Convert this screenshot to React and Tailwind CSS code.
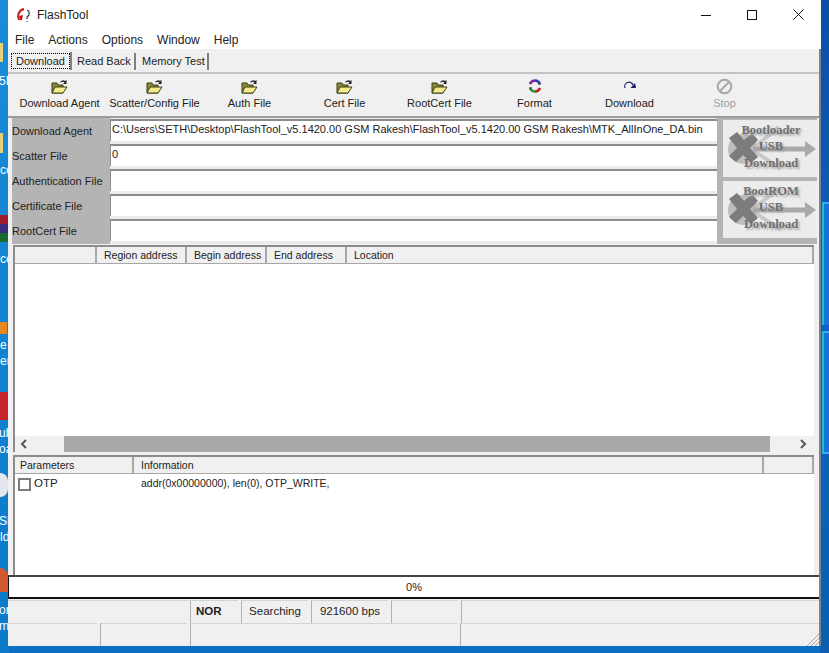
import React from "react";

const Folder = () => (
  <svg width="18" height="15" viewBox="0 0 18 15" className="-ml-[2px]">
    <path d="M2 4 L2 14 L13 14 L13 6 L8 6 L7 4 Z" fill="#8a8a3a" stroke="#3c3c14" strokeWidth="1" />
    <path d="M2 14 L5 8 L17 8 L13 14 Z" fill="#f4ec8c" stroke="#3c3c14" strokeWidth="1" />
    <path d="M10 3 Q13 0 15 2 L16.5 1 L16.5 5 L13 5 L14.5 3.5 Q13 2 11 3.5" fill="#222" />
  </svg>
);

const FormatIcon = () => (
  <svg width="14" height="14" viewBox="0 0 14 14" fill="none" strokeWidth="2.6">
    <path d="M2 5 A5.5 5.5 0 0 1 7 1.5" stroke="#7a2a9a" />
    <path d="M7 1.5 A5.5 5.5 0 0 1 12 5" stroke="#3a3ab0" />
    <path d="M12 9 A5.5 5.5 0 0 1 7 12.5" stroke="#d02020" />
    <path d="M7 12.5 A5.5 5.5 0 0 1 2 9" stroke="#2a9a3a" />
    <path d="M11 3 L13 5.5 L10 6 Z M3 11 L1 8.5 L4 8 Z" fill="#444" />
  </svg>
);

const RedoIcon = () => (
  <svg width="14" height="12" viewBox="0 0 14 12" fill="none">
    <path d="M2 8 A4 4 0 0 1 10 5" stroke="#1a1a70" strokeWidth="1.2" />
    <path d="M7.5 8 L13 8 L12 3 Z" fill="#1a1a70" />
  </svg>
);

const StopIcon = () => (
  <svg width="17" height="17" viewBox="0 0 17 17" fill="none" stroke="#a8a8a8" strokeWidth="2">
    <circle cx="8.5" cy="8.5" r="6.8" />
    <path d="M4 13 L13 4" />
  </svg>
);

const Chevron = ({ flip }) => (
  <svg width="8" height="10" viewBox="0 0 8 10" fill="none" stroke="#555" strokeWidth="2" className={flip ? "rotate-180" : ""}>
    <path d="M6 1 L2 5 L6 9" />
  </svg>
);

const tools = [
  { label: "Download Agent", icon: <Folder /> },
  { label: "Scatter/Config File", icon: <Folder /> },
  { label: "Auth File", icon: <Folder /> },
  { label: "Cert File", icon: <Folder /> },
  { label: "RootCert File", icon: <Folder /> },
  { label: "Format", icon: <FormatIcon /> },
  { label: "Download", icon: <RedoIcon /> },
  { label: "Stop", icon: <StopIcon />, off: true },
];

const fileRows = [
  { label: "Download Agent", value: "C:\\Users\\SETH\\Desktop\\FlashTool_v5.1420.00 GSM Rakesh\\FlashTool_v5.1420.00 GSM Rakesh\\MTK_AllInOne_DA.bin" },
  { label: "Scatter File", value: "0" },
  { label: "Authentication File", value: "" },
  { label: "Certificate File", value: "" },
  { label: "RootCert File", value: "" },
];

const regionCols = [
  { label: "", w: "w-[82px]" },
  { label: "Region address", w: "w-[90px]" },
  { label: "Begin address", w: "w-[80px]" },
  { label: "End address", w: "w-[80px]" },
  { label: "Location", w: "flex-1 border-r-0" },
];

const BootButton = ({ lines }) => (
  <div className="relative h-[57px] w-[94px] overflow-hidden bg-[#ececec]">
    <svg className="absolute left-0 top-0" width="94" height="57" viewBox="0 0 94 57">
      <circle cx="20" cy="29" r="15" fill="#bdbdbd" />
      <path d="M30 29 L84 29" stroke="#a9a9a9" strokeWidth="5" />
      <path d="M82 21 L93 29 L82 37 Z" fill="#a9a9a9" />
      <path d="M34 25 L56 7 M34 33 L58 49" stroke="#c8c8c8" strokeWidth="4" />
      <path d="M6 18 L14 12 L21 20 L29 13 L35 20 L27 28 L35 37 L28 43 L20 35 L13 42 L6 36 L14 28 Z" fill="#7c7c7c" />
    </svg>
    <div className="absolute inset-0 flex flex-col items-center justify-between pt-[3px] pb-[6px] pl-[2px] font-['Liberation_Serif',serif] text-[12.5px] leading-[15px] font-bold text-[#707070] [text-shadow:2px_2px_2px_#aaa]">
      {lines.map((t) => (
        <span key={t}>{t}</span>
      ))}
    </div>
  </div>
);

const HeaderCell = ({ label, className }) => (
  <div className={`flex h-full items-center whitespace-nowrap border-r-2 border-b border-[#a8a8a8] bg-[#f0f0f0] text-[10.5px] ${className}`}>{label}</div>
);

const StatusCell = ({ children, className }) => (
  <div className={`flex h-full items-center border-t border-l border-t-[#d4d4d4] border-l-[#b0b0b0] ${className}`}>{children}</div>
);

export default function App() {
  return (
    <div className="relative flex h-[653px] w-[829px] overflow-hidden bg-[#0a6fc2] font-['Liberation_Sans',sans-serif] text-[11px] text-[#222]">
      {/* bits of the desktop showing around the window */}
      <div className="absolute top-0 left-0 h-[653px] w-[9px] bg-gradient-to-b from-[#1a8cd8] to-[#0c79c9] text-[12px] leading-[14px] text-white">
        <div className="absolute top-[43px] left-0 h-[19px] w-[3px] bg-[#e8cf78]" />
        <span className="absolute top-[74px] -left-[1px]">5E</span>
        <div className="absolute top-[133px] left-0 h-[20px] w-[3px] bg-[#e8cf78]" />
        <span className="absolute top-[163px] left-0">ce</span>
        <div className="absolute top-[215px] left-0 h-[9px] w-[8px] bg-[#a01c2c]" />
        <div className="absolute top-[224px] left-0 h-[9px] w-[8px] bg-[#3a2a80]" />
        <div className="absolute top-[233px] left-0 h-[9px] w-[8px] bg-[#1c6a30]" />
        <span className="absolute top-[252px] left-0">ce</span>
        <div className="absolute top-[322px] left-0 h-[12px] w-[7px] bg-[#e8861c]" />
        <span className="absolute top-[338px] left-0">e</span>
        <span className="absolute top-[354px] left-0">er</span>
        <div className="absolute top-[392px] left-0 h-[28px] w-[8px] bg-[#c8242c]" />
        <span className="absolute top-[426px] -left-[1px]">ub</span>
        <span className="absolute top-[442px] -left-[1px]">oa</span>
        <div className="absolute top-[473px] left-0 h-[24px] w-[8px] rounded-r-full bg-[#e4e8ec]" />
        <span className="absolute top-[514px] -left-[1px]">Sh</span>
        <span className="absolute top-[530px] left-0">ld</span>
        <div className="absolute top-[568px] left-0 h-[24px] w-[8px] rounded-tr-full bg-[#d0582c]" />
        <span className="absolute top-[603px] -left-[1px]">or</span>
        <span className="absolute top-[619px] -left-[1px]">m</span>
      </div>
      <div className="absolute top-0 right-0 h-[653px] w-[9px] bg-gradient-to-b from-[#0b4fa6] via-[#0b62c4] to-[#0b5fae]">
        <div className="absolute top-[202px] left-[2px] h-[123px] w-[7px] border-t-2 border-l-2 border-[#2cb4e0] bg-[#0f78d0]" />
        <div className="absolute top-[331px] left-[2px] h-[123px] w-[7px] border-t-2 border-l-2 border-b-2 border-[#2cb4e0] bg-[#0f78d0]" />
      </div>

      <div className="relative ml-[8px] flex h-[646px] w-[813px] flex-col border-r-2 border-[#7c8288] bg-[#f0f0f0]">
        {/* title bar */}
        <div className="-mr-[2px] flex h-[30px] items-center bg-white">
          <svg className="ml-[9px]" width="14" height="16" viewBox="0 0 14 16" fill="none">
            <path d="M2 13 C0 8 2 3 7 2" stroke="#c01818" strokeWidth="2" />
            <path d="M2 9 L6 8 L5 13 L3 13 Z" fill="#c01818" />
            <path d="M10 3 C13 4 13 8 10 10 L10 12" stroke="#333" strokeWidth="1.2" />
            <path d="M10 14 L10 15" stroke="#333" strokeWidth="1.2" />
          </svg>
          <span className="ml-[6px] text-[12px]">FlashTool</span>
          <div className="ml-auto flex items-center">
            <svg className="mr-[36px]" width="10" height="10" viewBox="0 0 10 10" stroke="#111">
              <path d="M0 5.5 L10 5.5" />
            </svg>
            <svg className="mr-[36px]" width="10" height="10" viewBox="0 0 10 10" fill="none" stroke="#111">
              <rect x="0.5" y="0.5" width="9" height="9" />
            </svg>
            <svg className="mr-[17px]" width="11" height="11" viewBox="0 0 11 11" stroke="#111">
              <path d="M0.5 0.5 L10.5 10.5 M10.5 0.5 L0.5 10.5" />
            </svg>
          </div>
        </div>

        {/* menu */}
        <div className="-mr-[2px] flex h-[19px] items-center gap-[14px] bg-white pt-[2px] pl-[7px] text-[12px]">
          {["File", "Actions", "Options", "Window", "Help"].map((m) => (
            <span key={m}>{m}</span>
          ))}
        </div>

        {/* tabs */}
        <div className="flex h-[25px] items-start border-b-2 border-[#c4c4c4] pt-[3px] pl-[3px]">
          <div className="flex h-[18px] w-[61px] items-center border-r-2 border-[#808080]">
            <span className="flex h-[16px] w-[59px] items-center justify-center border border-dotted border-black">Download</span>
          </div>
          <div className="mt-[1px] flex h-[17px] w-[64px] items-center border-r-2 border-[#808080] pl-[5px]">Read Back</div>
          <div className="mt-[1px] flex h-[17px] w-[73px] items-center border-r-2 border-[#808080] pl-[6px]">Memory Test</div>
        </div>

        {/* toolbar */}
        <div className="flex h-[44px] border-b-2 border-[#9c9c9c] pl-[4px]">
          {tools.map((t) => (
            <div key={t.label} className={`flex w-[95px] flex-col items-center ${t.off ? "text-[#a0a0a0]" : ""}`}>
              <div className="mt-[4px] flex h-[17px] items-center">{t.icon}</div>
              <span className="whitespace-nowrap">{t.label}</span>
            </div>
          ))}
        </div>

        {/* file pickers */}
        <div className="ml-[4px] flex h-[126px] w-[805px] bg-[#b4b4b4]">
          <div className="flex w-[98px] flex-col pt-[1px]">
            {fileRows.map((r) => (
              <div key={r.label} className="flex h-[25px] items-center whitespace-nowrap">
                {r.label}
              </div>
            ))}
          </div>
          <div className="flex w-[607px] flex-col bg-[#ececec] pt-[1px]">
            {fileRows.map((r) => (
              <div key={r.label} className="h-[25px] pb-[3px]">
                <div className="h-full truncate border-t-2 border-l border-[#8c8c8c] bg-white pl-[1px] leading-[17px]">{r.value}</div>
              </div>
            ))}
          </div>
          <div className="flex w-[100px] flex-col gap-[4px] pt-[2px] pl-[6px]">
            <BootButton lines={["Bootloader", "USB", "Download"]} />
            <BootButton lines={["BootROM", "USB", "Download"]} />
          </div>
        </div>

        {/* region list */}
        <div className="mx-[5px] mt-[1px] flex h-[208px] flex-col border-t-2 border-l-2 border-[#8c8c8c] bg-white">
          <div className="flex h-[17px] shrink-0">
            {regionCols.map((c) => (
              <HeaderCell key={c.label || "blank"} label={c.label} className={`pt-[2px] pl-[7px] ${c.w}`} />
            ))}
          </div>
          <div className="flex-1" />
          <div className="flex h-[16px] items-center bg-[#f0f0f0]">
            <span className="flex w-[17px] justify-center"><Chevron /></span>
            <div className="ml-[32px] h-full w-[706px] bg-[#a8a8a8]" />
            <span className="ml-auto flex w-[22px] justify-center"><Chevron flip /></span>
          </div>
        </div>

        {/* parameters */}
        <div className="mx-[5px] mt-[3px] flex h-[120px] flex-col border-t-2 border-l-2 border-[#8c8c8c] bg-white">
          <div className="flex h-[17px] shrink-0">
            <HeaderCell label="Parameters" className="w-[119px] pl-[5px]" />
            <HeaderCell label="Information" className="w-[630px] pl-[7px]" />
            <HeaderCell label="" className="flex-1 border-r-0" />
          </div>
          <div className="flex items-center pt-[1px] pl-[3px]">
            <div className="h-[13px] w-[13px] border-2 border-[#7c7c7c] bg-white" />
            <span className="ml-[3px] w-[107px] text-[11.5px]">OTP</span>
            <span className="text-[10.5px]">addr(0x00000000), len(0), OTP_WRITE,</span>
          </div>
        </div>

        {/* progress */}
        <div className="flex h-[24px] items-center justify-center border-y-2 border-l border-y-[#111] border-t-[#444] border-l-[#111] bg-white">0%</div>

        {/* status bar */}
        <div className="flex h-[24px] pt-[1px] text-[11.5px]">
          <StatusCell className="w-[181px] border-l-0" />
          <StatusCell className="ml-[1px] w-[48px] pl-[5px] font-bold">NOR</StatusCell>
          <StatusCell className="ml-[3px] w-[67px] justify-center">Searching</StatusCell>
          <StatusCell className="ml-[3px] w-[77px] justify-center">921600 bps</StatusCell>
          <StatusCell className="ml-[3px] w-[67px]" />
          <StatusCell className="ml-[3px] flex-1" />
        </div>
        <div className="relative flex h-[23px]">
          <StatusCell className="w-[89px] border-l-0" />
          <StatusCell className="ml-[3px] w-[87px]" />
          <StatusCell className="ml-[3px] w-[267px]" />
          <StatusCell className="ml-[3px] flex-1" />
          <svg className="absolute right-0 bottom-0" width="13" height="13" viewBox="0 0 13 13" stroke="#a8a8a8">
            <path d="M13 1 L1 13 M13 5 L5 13 M13 9 L9 13" />
          </svg>
        </div>
      </div>
    </div>
  );
}
